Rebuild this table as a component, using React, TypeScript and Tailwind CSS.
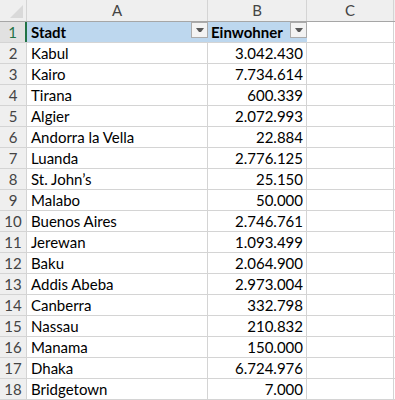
import React from "react";

const data: [string, string][] = [
  ["Kabul", "3.042.430"],
  ["Kairo", "7.734.614"],
  ["Tirana", "600.339"],
  ["Algier", "2.072.993"],
  ["Andorra la Vella", "22.884"],
  ["Luanda", "2.776.125"],
  ["St. John’s", "25.150"],
  ["Malabo", "50.000"],
  ["Buenos Aires", "2.746.761"],
  ["Jerewan", "1.093.499"],
  ["Baku", "2.064.900"],
  ["Addis Abeba", "2.973.004"],
  ["Canberra", "332.798"],
  ["Nassau", "210.832"],
  ["Manama", "150.000"],
  ["Dhaka", "6.724.976"],
  ["Bridgetown", "7.000"],
];

function Drop() {
  return (
    <div className="absolute right-0 top-0 w-[17px] h-[16px] border border-[#ababab] bg-[#f3f3f3] flex items-center justify-center">
      <svg width="8" height="5" viewBox="0 0 8 5">
        <path d="M0 0 H8 L5 4 H3 Z" fill="#595959" />
      </svg>
    </div>
  );
}

export default function App() {
  const font = { fontFamily: "Lato, 'Open Sans', sans-serif" };
  return (
    <div className="w-[395px] h-[400px] overflow-hidden bg-white text-[15px] text-black" style={font}>
      {/* header */}
      <div className="flex h-[22px] bg-[#efefef] border-b border-[#a6a6a6]">
        <div className="relative w-[27px] shrink-0 border-r border-[#d4d4d4]">
          <svg className="absolute right-[3px] bottom-[3px]" width="13" height="13" viewBox="0 0 13 13">
            <path d="M13 0 V13 H0 Z" fill="#d9d9d9" />
          </svg>
        </div>
        <div className="w-[181px] shrink-0 border-r border-[#d4d4d4] flex items-center justify-center text-[#444] text-[15px]">A</div>
        <div className="w-[99px] shrink-0 border-r border-[#d4d4d4] flex items-center justify-center text-[#444] text-[15px]">B</div>
        <div className="w-[87px] shrink-0 border-r border-[#d4d4d4] flex items-center justify-center text-[#444] text-[15px]">C</div>
        <div className="flex-1" />
      </div>
      {/* row 1 */}
      <div className="flex h-[21px] border-b border-[#d4d4d4]">
        <div className="w-[27px] shrink-0 bg-[#e1e1e1] border-r-2 border-[#217346] flex items-center justify-center text-[#217346] text-[15px] pt-[1px]">1</div>
        <div className="relative w-[181px] shrink-0 bg-[#bdd7ee] flex items-center pl-[4px] pt-[1px] font-bold">
          Stadt
          <Drop />
        </div>
        <div className="relative w-[99px] shrink-0 bg-[#bdd7ee] flex items-center pl-[3px] pt-[1px] font-bold">
          Einwohner
          <Drop />
        </div>
        <div className="w-[87px] shrink-0 border-r border-[#d4d4d4]" />
        <div className="flex-1" />
      </div>
      {data.map(([city, pop], i) => (
        <div key={i} className="flex h-[21px] border-b border-[#d4d4d4]">
          <div className="w-[27px] shrink-0 bg-[#efefef] border-r border-[#d4d4d4] flex items-center justify-center text-[#444] text-[15px] pt-[1px]">{i + 2}</div>
          <div className="w-[181px] shrink-0 border-r border-[#d4d4d4] flex items-center pl-[4px] pt-[1px]">{city}</div>
          <div className="w-[99px] shrink-0 border-r border-[#d4d4d4] flex items-center justify-end pr-[3px] pt-[1px]">{pop}</div>
          <div className="w-[87px] shrink-0 border-r border-[#d4d4d4]" />
          <div className="flex-1" />
        </div>
      ))}
    </div>
  );
}
